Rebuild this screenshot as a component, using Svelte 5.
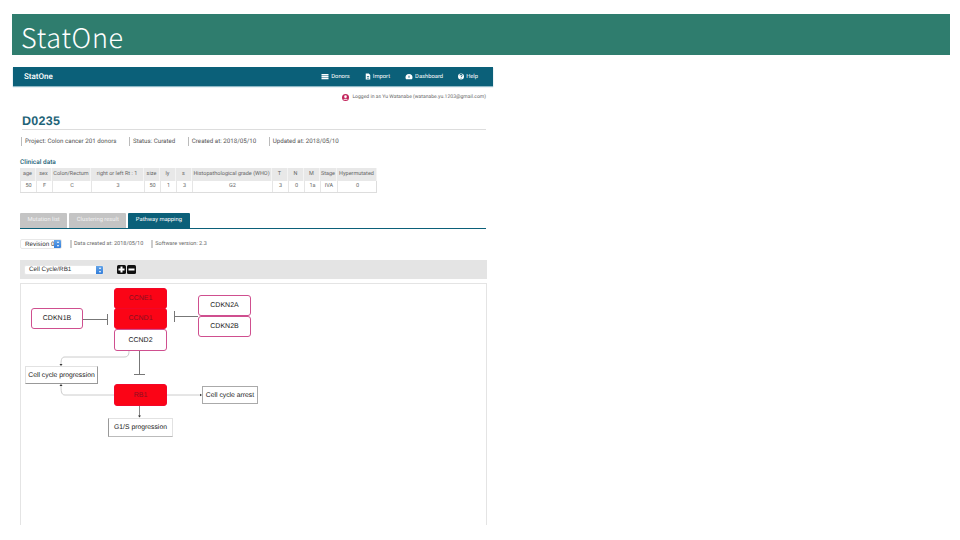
<script>
  const navItems = [
    { label: 'Donors', icon: 'list' },
    { label: 'Import', icon: 'file' },
    { label: 'Dashboard', icon: 'gauge' },
    { label: 'Help', icon: 'help' }
  ];
  const meta = ['Project: Colon cancer 201 donors', 'Status: Curated', 'Created at: 2018/05/10', 'Updated at: 2018/05/10'];
  const columns = [
    { head: 'age', value: '50', width: 16 },
    { head: 'sex', value: 'F', width: 16 },
    { head: 'Colon/Rectum', value: 'C', width: 39 },
    { head: 'right or left Rt : 1', value: '3', width: 53 },
    { head: 'size', value: '50', width: 16 },
    { head: 'ly', value: '1', width: 16 },
    { head: 's', value: '3', width: 16 },
    { head: 'Histopathological grade (WHO)', value: 'G2', width: 80 },
    { head: 'T', value: '3', width: 16 },
    { head: 'N', value: '0', width: 16 },
    { head: 'M', value: '1a', width: 16 },
    { head: 'Stage', value: 'IVA', width: 17 },
    { head: 'Hypermutated', value: '0', width: 40 }
  ];
  const tabs = ['Mutation list', 'Clustering result', 'Pathway mapping'];
  // diagram nodes sit on a free canvas, coords relative to the panel
  const nodes = [
    { label: 'CCNE1', x: 93, y: 4, w: 53, h: 21, kind: 'hit' },
    { label: 'CCND1', x: 93, y: 24, w: 53, h: 21, kind: 'hit' },
    { label: 'CCND2', x: 93, y: 45, w: 53, h: 22, kind: 'gene' },
    { label: 'CDKN1B', x: 10, y: 24, w: 52, h: 21, kind: 'gene' },
    { label: 'CDKN2A', x: 177, y: 11, w: 53, h: 21, kind: 'gene' },
    { label: 'CDKN2B', x: 177, y: 32, w: 53, h: 21, kind: 'gene' },
    { label: 'RB1', x: 93, y: 100, w: 53, h: 22, kind: 'hit' },
    { label: 'Cell cycle progression', x: 4, y: 82, w: 73, h: 18, kind: 'state right' },
    { label: 'Cell cycle arrest', x: 181, y: 102, w: 56, h: 18, kind: 'state boxed' },
    { label: 'G1/S progression', x: 87, y: 134, w: 65, h: 19, kind: 'state left' }
  ];
</script>

<div class="slide">
  <h1 class="title">StatOne</h1>

  <div class="shot">
    <nav class="nav">
      <span class="brand">StatOne</span>
      <div class="nav-items">
        {#each navItems as item}
          <span class="nav-item">
            <svg viewBox="0 0 16 16" width={item.icon === 'list' || item.icon === 'gauge' ? 8 : 6} height="7" fill="#fff">
              {#if item.icon === 'list'}
                <path d="M0 2h16v3H0zM0 6.500h16v3H0zM0 11h16v3H0z" />
              {:else if item.icon === 'file'}
                <path d="M2 0h8l4 4v12H2zM5 7v2h6V7zm0 4v2h6v-2z" fill-rule="evenodd" />
              {:else if item.icon === 'gauge'}
                <path d="M8 2a8 8 0 0 0-8 8c0 2 .6 3 1.500 4h13c.9-1 1.500-2 1.500-4a8 8 0 0 0-8-8zM7 6l2 0 0 5-2 0z" fill-rule="evenodd" />
              {:else}
                <path d="M8 0a8 8 0 1 0 0 16A8 8 0 0 0 8 0zM7 12h2v2H7zm0-2c0-3 3-3 3-5 0-1-1-1.500-2-1.500S6 4 6 5H4c0-2.500 2-3.500 4-3.500s4 1 4 3.500c0 3-3 3-3 5z" fill-rule="evenodd" />
              {/if}
            </svg>
            {item.label}
          </span>
        {/each}
      </div>
    </nav>

    <div class="login">
      <svg viewBox="0 0 16 16" width="7" height="7">
        <circle cx="8" cy="8" r="8" fill="#c2255c" />
        <circle cx="8" cy="6" r="3" fill="#fff" />
        <path d="M3 13c1-3 9-3 10 0z" fill="#fff" />
      </svg>
      Logged in as Yu Watanabe (watanabe.yu.1203@gmail.com)
    </div>

    <div class="content">
      <h2 class="donor">D0235</h2>
      <div class="meta">
        {#each meta as entry}
          <span class="meta-item">{entry}</span>
        {/each}
      </div>
    </div>

    <section class="clinical">
      <h3>Clinical data</h3>
      <div class="table">
        {#each columns as col}
          <div class="col" style="width: {col.width}px">
            <div class="th">{col.head}</div>
            <div class="td">{col.value}</div>
          </div>
        {/each}
      </div>
    </section>

    <div class="tabs">
      {#each tabs as tab, i}
        <span class="tab" class:active={i === 2}>{tab}</span>
      {/each}
    </div>

    <div class="revision">
      <div class="select small"><span>Revision 0</span><i></i></div>
      <span class="rev-note">Data created at: 2018/05/10</span>
      <span class="rev-note">Software version: 2.3</span>
    </div>

    <div class="toolbar">
      <div class="select wide"><span>Cell Cycle/RB1</span><i></i></div>
      <svg class="zoom-btns" viewBox="0 0 19 9" width="19" height="9">
        <rect width="9" height="9" rx="1.500" fill="#111" />
        <path d="M3.500 1.500h2v2h2v2h-2v2h-2v-2h-2v-2h2z" fill="#fff" />
        <rect x="10" width="9" height="9" rx="1.500" fill="#111" />
        <path d="M11.500 3.500h6v2h-6z" fill="#fff" />
      </svg>
    </div>

    <div class="panel">
      <svg class="links" width="467" height="242" viewBox="0 1 467 242">
        <g fill="none" stroke="#777" stroke-width="1">
          <path d="M62 36.500h24.500M86.500 31v11" />
          <path d="M177 33.500h-23.500M153.500 28v11" />
          <path d="M118.500 68v24M113 91.500h11" />
        </g>
        <g fill="none" stroke="#ccc" stroke-width="1">
          <path d="M108 68c0 5-2 6-5 6H44c-3 0-4 2-4 7" />
          <path d="M93 112H44c-3 0-4-2-4-9" />
          <path d="M146 112h33" />
        </g>
        <path d="M118.500 123v10" stroke="#888" fill="none" />
        <g fill="#333">
          <path d="M38.500 81h3l-1.500 2zM38.500 103h3l-1.500-2zM179 110.800v2.400l2-1.200zM117 132.500h3l-1.500 2z" />
        </g>
      </svg>
      {#each nodes as node}
        <div class="node {node.kind}" style="left: {node.x}px; top: {node.y}px; width: {node.w}px; height: {node.h}px">{node.label}</div>
      {/each}
    </div>
  </div>
</div>

<style>
  :global(body) {
    margin: 0;
    background: #fff;
  }

  .slide {
    width: 960px;
    height: 540px;
    padding-top: 14px;
    box-sizing: border-box;
    overflow: hidden;
    font-family: "Liberation Sans", Arial, sans-serif;
    color: #333;
    text-rendering: geometricPrecision;
  }

  .title {
    margin: 0 10px 12px 12px;
    height: 36px;
    padding: 5px 0 0 9px;
    background: #2f7d6e;
    color: #fff;
    font-family: "Noto Sans CJK JP", "Noto Sans", sans-serif;
    font-size: 27px;
    font-weight: 300;
    line-height: 36px;
    letter-spacing: 0.7px;
  }

  .shot {
    width: 480px;
    margin-left: 13px;
  }

  .nav {
    height: 19px;
    display: flex;
    align-items: center;
    justify-content: space-between;
    padding: 0 15px 0 11px;
    background: #0b6079;
    color: #fff;
    font-family: Roboto, sans-serif;
    box-shadow: 0 1px 1px #8fb9c6;
  }

  .brand {
    font-size: 8px;
    font-weight: 500;
  }

  .nav-items {
    display: flex;
    gap: 15px;
  }

  .nav-item {
    display: flex;
    align-items: center;
    gap: 2px;
    font-size: 5.800px;
  }

  .login {
    display: flex;
    justify-content: flex-end;
    align-items: center;
    gap: 3px;
    margin: 7px 7px 0 0;
    height: 8px;
    font-family: Roboto, sans-serif;
    font-size: 5.050px;
    color: #666;
  }

  .content {
    margin: 0 7px 0 9px;
  }

  .donor {
    margin: 14px 0 0;
    height: 13px;
    padding-bottom: 1px;
    border-bottom: 1px solid #ddd;
    font-size: 12.500px;
    line-height: 12px;
    color: #1f6478;
    letter-spacing: 0.3px;
  }

  .meta {
    display: flex;
    gap: 12.500px;
    margin: 6px 0 0 -1px;
    height: 10px;
    align-items: center;
  }

  .meta-item {
    border-left: 1px solid #bbb;
    padding-left: 3px;
    font-family: Roboto, sans-serif;
    font-size: 6.200px;
    line-height: 9px;
    color: #555;
  }

  .clinical {
    margin: 11px 0 0 7px;
  }

  .clinical h3 {
    margin: 0;
    height: 11px;
    font-size: 6.500px;
    font-weight: 500;
    line-height: 11px;
    color: #1f6478;
    font-family: Roboto, sans-serif;
  }

  .table {
    display: flex;
    width: 357px;
    border-bottom: 1px solid #ddd;
    border-right: 1px solid #ddd;
    box-sizing: border-box;
    font-family: Roboto, sans-serif;
    font-size: 5.500px;
    color: #666;
  }

  .col {
    flex: none;
    text-align: center;
    white-space: nowrap;
  }

  .th {
    height: 13px;
    line-height: 13px;
    background: #e8e8e8;
    border-right: 1px solid #f4f4f4;
    overflow: hidden;
  }

  .td {
    height: 11px;
    line-height: 11px;
    border-left: 1px solid #e6e6e6;
  }

  .tabs {
    display: flex;
    gap: 2px;
    margin: 20px 7px 0 7px;
    height: 15px;
    border-bottom: 1px solid #0b6079;
    font-family: Roboto, sans-serif;
    font-size: 5.800px;
  }

  .tab {
    padding: 0 7.500px;
    line-height: 15px;
    background: #c4c4c4;
    color: #f2f2f2;
    border-radius: 1px 1px 0 0;
  }

  .tab.active {
    background: #0b6079;
    color: #fff;
  }

  .revision {
    display: flex;
    align-items: center;
    gap: 8px;
    margin: 10px 0 0 7px;
    height: 10px;
    font-family: Roboto, sans-serif;
    font-size: 5.500px;
    color: #666;
  }

  .rev-note {
    border-left: 2px solid #ccc;
    padding-left: 2px;
    line-height: 8px;
  }

  .select {
    position: relative;
    display: flex;
    align-items: center;
    height: 10px;
    box-sizing: border-box;
    padding-left: 4px;
    background: #fff;
    border: 1px solid #e8e8e8;
    border-radius: 2px;
    font-family: "Liberation Sans", sans-serif;
    font-size: 6.300px;
    color: #333;
    overflow: hidden;
    white-space: nowrap;
  }

  /* blue stepper on the native looking select */
  .select i {
    position: absolute;
    top: -1px;
    right: -1px;
    bottom: -1px;
    width: 8px;
    background: linear-gradient(#6aa9ea, #2d79d8);
    border-radius: 0 2px 2px 0;
  }

  .select i::before,
  .select i::after {
    content: '';
    position: absolute;
    left: 2.500px;
    border-left: 1.500px solid transparent;
    border-right: 1.500px solid transparent;
  }

  .select i::before {
    top: 2px;
    border-bottom: 2px solid #fff;
  }

  .select i::after {
    bottom: 2px;
    border-top: 2px solid #fff;
  }

  .select.small {
    width: 42px;
    flex: none;
  }

  .select.wide {
    width: 80px;
    flex: none;
  }

  .toolbar {
    display: flex;
    align-items: center;
    gap: 13px;
    margin: 11px 6px 0 7px;
    height: 19px;
    padding-left: 4px;
    background: #e4e4e4;
  }

  .zoom-btns {
    flex: none;
  }

  .panel {
    position: relative;
    height: 242px;
    width: 467px;
    margin: 4px 0 0 7px;
    box-sizing: border-box;
    background: #fff;
    border: 1px solid #e4e4e4;
    border-bottom: none;
  }

  .links {
    position: absolute;
    left: 0;
    top: 0;
  }

  .node {
    position: absolute;
    display: flex;
    align-items: center;
    justify-content: center;
    box-sizing: border-box;
    font-family: "Liberation Sans", sans-serif;
    font-size: 7px;
    white-space: nowrap;
    color: #222;
  }

  .node.gene {
    background: #fff;
    border: 1px solid #cf4f8f;
    border-radius: 3px;
  }

  .node.hit {
    background: #fb0416;
    border: 1px solid #f2062a;
    border-radius: 3px;
    color: #8a1020;
  }

  .node.state {
    background: #fff;
    border: 1px solid #e2e2e2;
    font-size: 6.800px;
  }

  .node.state.right {
    border-right-color: #999;
    border-bottom-color: #999;
  }

  .node.state.boxed {
    border-color: #aaa;
  }

  .node.state.left {
    border-left-color: #999;
    border-bottom-color: #bbb;
  }
</style>
